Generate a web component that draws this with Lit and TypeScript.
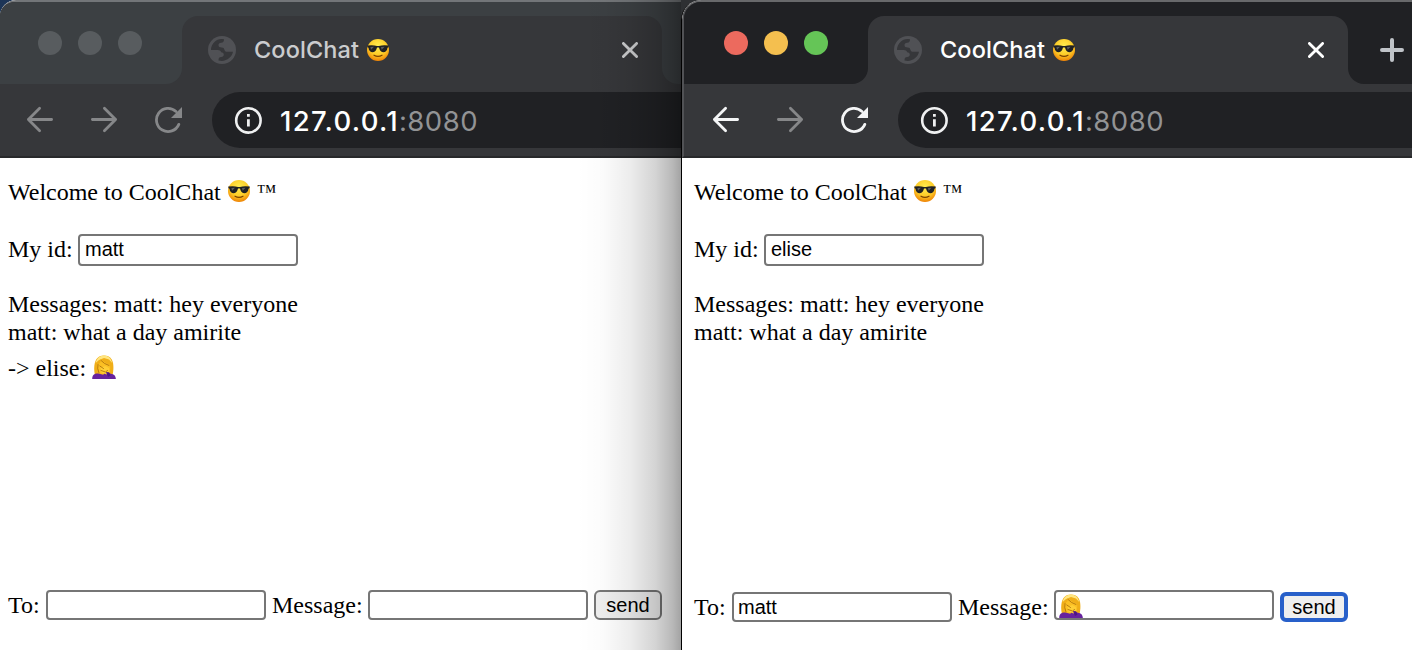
import { LitElement, html, css, svg, nothing } from "lit";
import { customElement, property } from "lit/decorators.js";

const cool = () => html`<svg class="emoji" viewBox="0 0 24 24" width="24" height="24" role="img" aria-label="cool">
  <defs>
    <radialGradient id="face" cx=".5" cy=".32" r=".68">
      <stop offset="0" stop-color="#ffee50" /><stop offset=".6" stop-color="#fdcb27" /><stop offset="1" stop-color="#ee8306" />
    </radialGradient>
  </defs>
  <circle cx="12" cy="12" r="11" fill="url(#face)" />
  <path d="M1.200 7.600Q6.500 6.600 11 7.900h2q4.500-1.300 9.800-.3l-.3 1.600-1 .6c-.4 3-1.700 4.400-4.300 4.400-2.500 0-3.600-1.900-4.200-4.600h-2c-.6 2.700-1.700 4.600-4.200 4.600-2.600 0-3.900-1.400-4.300-4.400l-1-.6z" fill="#202123" />
  <path d="M4.400 9l3.600-.2-3 3zM15 9l3.600-.2-3 3z" fill="#5b5d60" />
  <path d="M8 17.200q4 2.200 8 0" fill="none" stroke="#7b4300" stroke-width="1.200" stroke-linecap="round" />
</svg>`;

const facepalm = () => html`<svg class="emoji" viewBox="0 0 24 24" width="24" height="24" role="img" aria-label="facepalm">
  <path d="M3 20.500C1.500 14 1 .5 12 .5S22 13 20.500 20.500z" fill="#f0ae18" />
  <path d="M3.600 8C5 2.500 8.300.5 12 .5s7.200 2.300 8.200 7.500L17 4.500 12 3 7 5z" fill="#ffe680" />
  <path d="M5.800 9.500C8 8.500 8.800 6.500 9.300 4.500c1.700 2.500 5 3.500 8.700 5.500.8 5-.5 10-5.500 10s-7.200-5-6.700-10.500z" fill="#fbbf24" />
  <path d="M.2 24c0-3.800 2.300-5.600 6-5.400l5 1.200 3-3.300 4.500 2.200c3.500.4 5 2 5.200 5.300z" fill="#67229e" />
  <path d="M8.500 12.500l5-1.500 3.500 2 .5 4-3 2.500-5-2z" fill="#ffce35" />
  <path d="M9 5.500q3 3.500 8 5M7.800 11l3.700 2.500M9 15.500l4.500 1.500 2-1.500M6 9.500q-1 4 .8 8" fill="none" stroke="#a76909" stroke-width=".8" stroke-linecap="round" />
  <path d="M14 17l3 .2 1.500 3.300-2.500 1.500z" fill="#4d1586" />
</svg>`;

const globe = html`<svg width="28" height="28" viewBox="0 0 28 28">
  <circle cx="14" cy="14" r="14" fill="#505155" />
  <path d="M3 14A11 11 0 0 1 16 3.200c.2 2-.8 3.300-2.800 3.500-1.900.2-2.700.9-2.700 2.400 0 1.800 1.200 2.400 3.200 2.400 1.800 0 2.300.8 2.800 2.500.4 1.400 1.300 1.800 3 1.800H25C24 21.500 17.500 26.500 10.500 24.400c0-2.500.8-3.400 2.700-3.400 1.700 0 2.600-.8 2.600-2.400 0-1.400-1-2-2.600-2.300-.5-1.600-1.700-2.300-3.400-2.300z" fill="#36373a" />
</svg>`;

@customElement("browser-window")
export class BrowserWindow extends LitElement {
  @property({ type: Boolean, reflect: true }) active = false;
  @property({ type: String }) user = "";
  @property({ type: String }) recipient = "";
  @property({ type: Boolean }) reply = false;

  static styles = css`
    :host { display: flex; flex-direction: column; height: 650px; box-sizing: border-box; background: #fff; overflow: hidden; position: relative; color: #000; --strip: #3c4043; --ink: #cbccce; --nav: #868789; }
    :host([active]) { --strip: #202124; --ink: #fff; --nav: #f4f5f6; }
    * { box-sizing: border-box; }
    svg { display: block; flex: none; }
    .chrome { height: 158px; background: #36373a; border-top: 2px solid #737679; border-bottom: 2px solid #28292b; flex: none; border-top-left-radius: 16px; overflow: hidden; }
    :host([active]) .chrome { border-left: 2px solid #515255; border-top-left-radius: 19px; border-top-color: #68696b; }
    .strip { height: 82px; background: #36373a; display: flex; }
    .lights { width: 182px; flex: none; background: var(--strip); border-bottom-right-radius: 16px; display: flex; gap: 16px; padding: 29px 0 0 38px; }
    :host([active]) .lights { width: 184px; padding-left: 40px; }
    .dot { width: 24px; height: 24px; border-radius: 50%; background: #585c5f; }
    :host([active]) .red { background: #ec6a5e; }
    :host([active]) .amber { background: #f4bf4f; }
    :host([active]) .green { background: #65c557; }
    .tabwrap { width: 480px; flex: none; background: linear-gradient(var(--strip) 50%, #36373a 50%); }
    .tab { height: 68px; margin-top: 14px; border-radius: 16px 16px 0 0; background: #36373a; display: flex; align-items: center; padding: 0 24px 0 26px; color: var(--ink); }
    .title { font: 450 23.500px/28px Inter, sans-serif; margin-left: 18px; letter-spacing: .1px; white-space: pre; width: 105px; }
    .tab .emoji { margin-left: 7px; }
    .close { margin-left: auto; }
    .after { flex: 1; background: var(--strip); border-bottom-left-radius: 16px; padding: 36px 0 0; overflow: hidden; }
    .plus { margin-left: 32px; }
    .bar { height: 72px; display: flex; align-items: center; padding: 8px 0; }
    :host([active]) .bar { padding-left: 2px; }
    .nav { display: flex; gap: 36px; margin-left: 26px; color: var(--nav); width: 186px; }
    .fwd { color: #868789; }
    .omni { flex: 1; height: 56px; background: #202124; border-radius: 28px 0 0 28px; display: flex; align-items: center; padding-left: 22px; color: #fff; font: 450 27.500px/34px Inter, sans-serif; white-space: pre; }
    .url { margin: 2px 0 0 18px; letter-spacing: 1.300px; }
    .port { color: #929395; font-weight: 400; letter-spacing: .5px; }
    .page { flex: 1; display: flex; flex-direction: column; padding: 20px 0 28px 8px; font: 24px/28px "Liberation Serif", serif; }
    :host([active]) .page { padding-left: 12px; }
    .row { display: flex; white-space: pre; }
    .welcome { height: 28px; }
    .welcome .emoji { margin: 1px 6px 0 0; }
    .tm { font-size: 20px; line-height: 26px; }
    .identity { margin: 28px 0 24px; height: 32px; }
    .identity .label { padding-top: 1px; width: 70px; }
    .field { width: 220px; height: 30px; border: 2px solid #767676; border-radius: 4px; padding: 0 4px; background: #fff; font: 20px/26px "Liberation Sans", sans-serif; color: #000; outline: 0; flex: none; display: block; margin: 0; }
    .identity .field { height: 32px; padding: 0 5px 1px; }
    .reply { margin-top: 8px; }
    .reply .emoji { margin-top: 1px; }
    .form { margin-top: auto; height: 32px; }
    .form .label { padding-top: 1px; }
    .to { width: 38px; }
    .msg { width: 96px; margin-left: 6px; }
    .send { width: 68px; height: 30px; margin: 0 0 0 6px; border: 2px solid #767676; border-radius: 6px; background: #efefef; font: 20px/26px "Liberation Sans", sans-serif; padding: 0; color: #000; }
    :host([active]) .drop { margin-top: 2px; }
    :host([active]) .send { border: 4px solid #2860ca; line-height: 22px; }
    .boxed { padding-left: 3px; }
    .boxed .emoji { margin-top: 2px; }
    .shade { position: absolute; inset: 0 0 0 auto; width: 104px; background: linear-gradient(90deg, transparent, rgba(0,0,0,.015) 25%, rgba(0,0,0,.07) 50%, rgba(0,0,0,.17) 75%, rgba(0,0,0,.28) 92%, rgba(0,0,0,.36)); pointer-events: none; }
  `;

  render() {
    return html`
      <div class="chrome">
        <div class="strip">
          <div class="lights"><i class="dot red"></i><i class="dot amber"></i><i class="dot green"></i></div>
          <div class="tabwrap"><div class="tab">
            ${globe}<span class="title">CoolChat</span>${cool()}
            <svg class="close" width="16" height="16" viewBox="0 0 16 16" stroke="currentColor" stroke-width="2.800" stroke-linecap="round"><path d="M1.400 1.400l13.200 13.200M14.600 1.400L1.400 14.600" /></svg>
          </div></div>
          <div class="after">${this.active ? html`<svg class="plus" width="24" height="24" stroke="#c0c4c9" stroke-width="4" stroke-linecap="round"><path d="M12 2v20M2 12h20" /></svg>` : nothing}</div>
        </div>
        <div class="bar">
          <div class="nav">
            <svg width="28" height="28" viewBox="0 0 28 28" fill="none" stroke="currentColor" stroke-width="2.800" stroke-linecap="round" stroke-linejoin="round"><path d="M13.600 2.300L2.400 13.500 13.600 24.700M2.400 13.500H25.600" /></svg>
            <svg class="fwd" width="28" height="28" viewBox="0 0 28 28" fill="none" stroke="currentColor" stroke-width="2.800" stroke-linecap="round" stroke-linejoin="round"><path d="M14.400 2.300L25.600 13.500 14.400 24.700M25.600 13.500H2.400" /></svg>
            <svg width="28" height="28" viewBox="0 0 28 28"><path d="M24.800 18.400A11.600 11.600 0 1 1 22 5.500" fill="none" stroke="currentColor" stroke-width="2.800" stroke-linecap="round" /><path d="M28 1v11H17z" fill="currentColor" /></svg>
          </div>
          <div class="omni">
            <svg width="28" height="28" viewBox="0 0 28 28"><circle cx="14.400" cy="14.400" r="12.200" fill="none" stroke="#eff0f1" stroke-width="2.600" /><path d="M13 8h2.800v2.800h-2.800zM13 13.200h2.800v7.300h-2.800z" fill="#eff0f1" /></svg>
            <span class="url">127.0.0.1<span class="port">:8080</span></span>
          </div>
        </div>
      </div>
      <div class="page">
        <div class="row welcome"><span>Welcome to CoolChat </span>${cool()}<span class="tm">™</span></div>
        <label class="row identity"><span class="label">My id:</span><input class="field" .value=${this.user} /></label>
        <div>Messages: matt: hey everyone</div>
        <div>matt: what a day amirite</div>
        ${this.reply ? html`<div class="row reply"><span>-&gt; elise: </span>${facepalm()}</div>` : nothing}
        <div class="row form">
          <span class="label to drop">To:</span><input class="field drop" .value=${this.recipient} />
          <span class="label msg drop">Message:</span><div class="field boxed" role="textbox">${this.active ? facepalm() : nothing}</div>
          <button class="send drop">send</button>
        </div>
      </div>
      ${this.active ? nothing : html`<div class="shade"></div>`}
    `;
  }
}

@customElement("app-root")
export class AppRoot extends LitElement {
  static styles = css`
    :host { display: grid; grid-template-columns: 681px 731px; height: 650px; overflow: hidden; background: #1d3557; }
    .right { background: linear-gradient(#2e3033 83px, #202124 84px 157px, #a5a5a5 158px); }
    .right browser-window { border-left: 1px solid #000; border-top-left-radius: 20px; }
    .left { background: #1d3557; }
    .left browser-window { border-top-left-radius: 16px; }
  `;
  render() {
    return html`
      <div class="left"><browser-window user="matt" reply></browser-window></div>
      <div class="right"><browser-window active user="elise" recipient="matt"></browser-window></div>
    `;
  }
}
